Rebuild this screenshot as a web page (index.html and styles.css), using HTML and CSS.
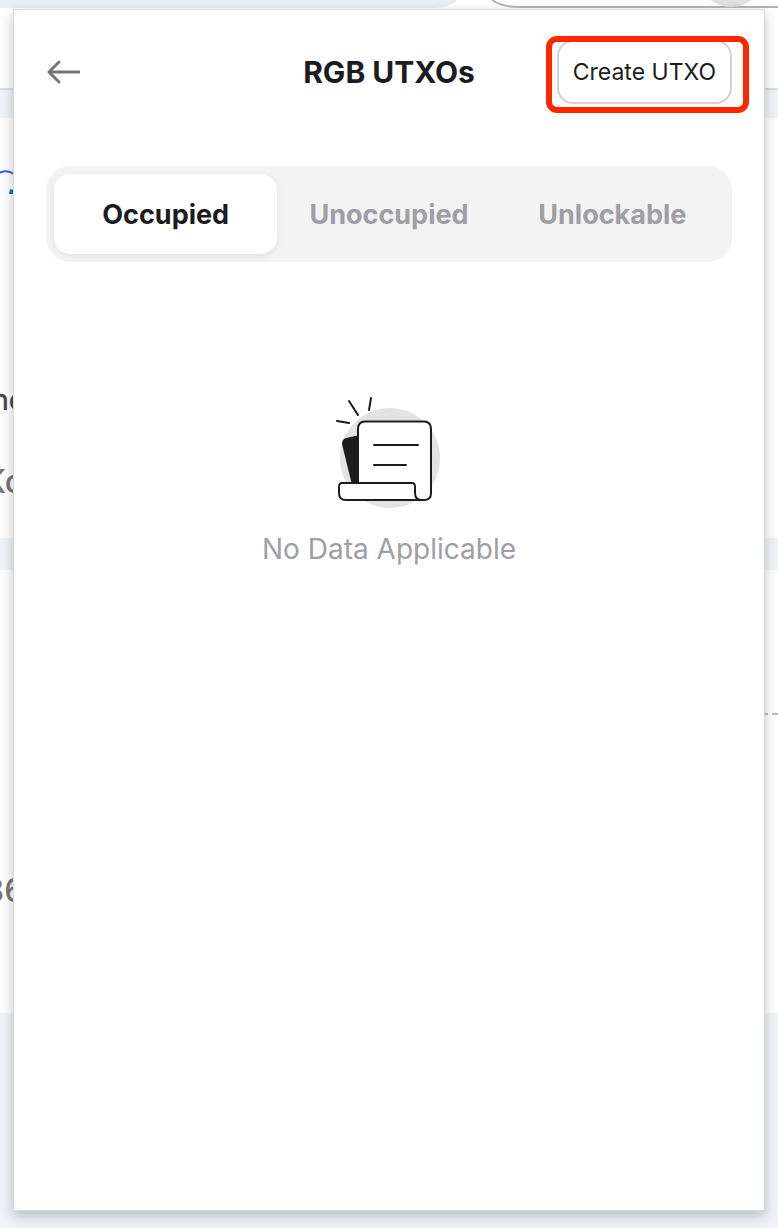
FILE: index.html
```
<!DOCTYPE html>
<html lang="en">

<head>
  <meta charset="utf-8" />
  <meta name="viewport" content="width=device-width, initial-scale=1" />
  <title>RGB UTXOs</title>
  <link rel="stylesheet" href="styles.css">
</head>

<body>
  <!-- browser page behind the wallet -->
  <div class="page">
    <div class="tab-strip">
      <svg width="778" height="8" viewBox="0 0 778 8">
        <path d="M436 8Q450 7 458 0H778V8Z" fill="#fff" />
        <path d="M492 0Q502 7 518 7H778" fill="none" stroke="#b5b5b5" stroke-width="2" />
        <circle cx="731" cy="-26" r="33" fill="#e0e0e0" />
      </svg>
    </div>
    <div class="toolbar"></div>
    <div class="band account">
      <svg class="spinner" width="14" height="26" viewBox="0 0 14 26">
        <path d="M-1 3Q7-1 14 4" fill="none" stroke="#2b5ff5" stroke-width="2" />
        <path d="M9 24L10 19L14 20V24Z" fill="#2b5ff5" />
      </svg>
      <div class="name">ne</div>
      <div class="value">Ko</div>
    </div>
    <div class="band details">
      <div class="dashes"></div>
      <div class="value">86</div>
    </div>
  </div>

  <div class="popup">
    <header class="header">
      <a class="back" href="#" aria-label="Back">
        <svg width="36" height="24" viewBox="0 0 36 24" fill="none" stroke="#777" stroke-width="3" stroke-linecap="round" stroke-linejoin="round">
          <path d="M13 2L3 12L13 22" />
          <path d="M3 12H34" stroke-linecap="butt" />
        </svg>
      </a>
      <h1>RGB UTXOs</h1>
      <div class="action">
        <button type="button" class="create">Create UTXO</button>
      </div>
    </header>

    <nav class="tabs">
      <button type="button" class="tab active">Occupied</button>
      <button type="button" class="tab">Unoccupied</button>
      <button type="button" class="tab">Unlockable</button>
    </nav>

    <div class="empty">
      <svg width="108" height="112" viewBox="335 397 108 112" stroke="#1c1c1e" stroke-width="2" stroke-linecap="round" stroke-linejoin="round">
        <circle cx="390" cy="458" r="50" fill="#e3e3e3" stroke="none" />
        <path d="M360 435L346 438Q342 439 342 444L352 485H360Z" fill="#1c1c1e" stroke="none" />
        <path d="M358 483V429Q358 421.500 365 421.500H424Q431 421.500 431 429V493Q431 500 424 500H358Z" fill="#fff" />
        <path d="M342 483H412Q415 483 415 487V493Q415 500 422 500H346Q339 500 339 493V487Q339 483 342 483Z" fill="#fff" />
        <path d="M374 445H418M374 465H406M349 401L358 415M371 398L369 410M337 421L349 423" fill="none" />
      </svg>
      <p>No Data Applicable</p>
    </div>
  </div>
</body>

</html>
```
FILE: styles.css
```
* {
  box-sizing: border-box;
}

body {
  margin: 0;
  min-height: 100vh;
  position: relative;
  font-family: Inter, sans-serif;
  color: #1c1c1e;
  background-color: #f0f4f8;
}

.page {
  overflow: hidden;
}

.tab-strip {
  height: 8px;
  background-color: #e9edf6;
}

.tab-strip svg,
.spinner,
.empty svg {
  display: block;
}

.toolbar {
  height: 82px;
  background-color: #fff;
  border-bottom: 2px solid #dcdfe0;
}

.band {
  background-color: #fff;
  font-size: 32px;
  line-height: 40px;
}

.account {
  height: 420px;
  margin-top: 28px;
  padding-top: 52px;
}

.name,
.value {
  margin-left: -16px;
  color: #777;
  font-weight: 500;
}

.name {
  margin-top: 184px;
  margin-left: -8px;
  color: #4c4c50;
  font-size: 28px;
}

.account .value {
  margin-top: 42px;
}

.details {
  height: 443px;
  margin-top: 32px;
  padding-top: 143px;
}

.dashes {
  margin-left: 50%;
  border-top: 2px dashed #bbb;
}

.details .value {
  margin-top: 156px;
}

.popup {
  position: absolute;
  top: 9px;
  right: 13px;
  bottom: 17px;
  left: 13px;
  padding: 30px 32px;
  background-color: #fff;
  border: 1px solid #d9dbdb;
  box-shadow: 0 5px 12px rgba(0, 0, 0, 0.24);
}

.header {
  display: grid;
  grid-template-columns: 1fr auto 1fr;
  align-items: center;
}

.back {
  display: flex;
}

h1 {
  margin: 0;
  font-size: 30px;
  line-height: 40px;
}

.action {
  justify-self: end;
  position: relative;
}

/* red marker around the button */
.action::after {
  content: "";
  position: absolute;
  top: -4px;
  right: -17px;
  bottom: -9px;
  left: -11px;
  border: 6px solid #ff2600;
  border-radius: 11px;
  pointer-events: none;
}

.create {
  display: block;
  height: 64px;
  padding: 0 14px;
  border: 2px solid #d3d3d3;
  border-radius: 16px;
  background-color: #fff;
  color: #1c1c1e;
  font-family: Inter, sans-serif;
  font-size: 23px;
}

.tabs {
  display: grid;
  grid-template-columns: repeat(3, 1fr);
  margin-top: 62px;
  padding: 8px;
  border-radius: 24px;
  background-color: #f3f3f3;
}

.tab {
  height: 80px;
  padding: 0;
  border: 0;
  border-radius: 16px;
  background: none;
  color: #9e9ea4;
  font-family: Inter, sans-serif;
  font-size: 27px;
  font-weight: bold;
}

.tab.active {
  background-color: #fff;
  color: #1c1c1e;
  box-shadow: 0 2px 6px rgba(0, 0, 0, 0.08);
}

.empty {
  display: flex;
  flex-direction: column;
  align-items: center;
  margin-top: 135px;
}

.empty p {
  margin: 20px 0 0;
  color: #9e9ea4;
  font-size: 28px;
  line-height: 40px;
}
```
